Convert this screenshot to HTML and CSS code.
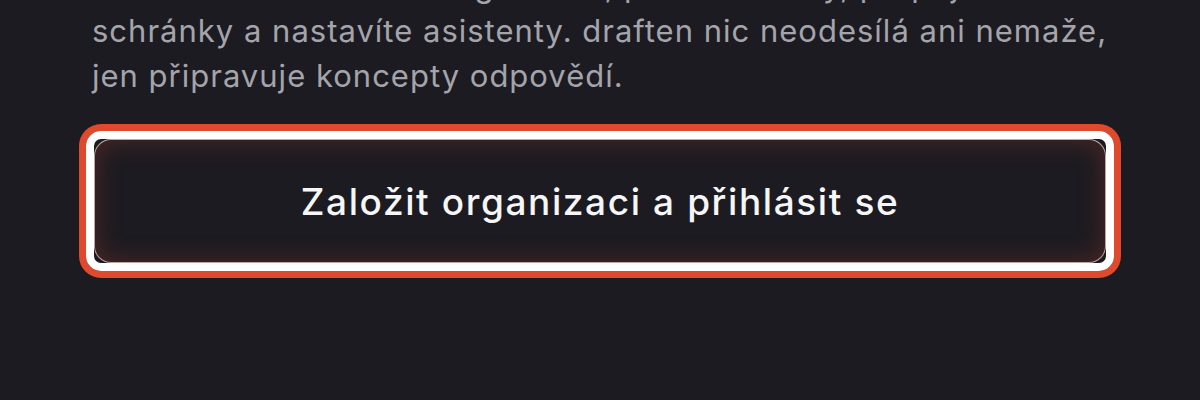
FILE: index.html
```html
<!DOCTYPE html>
<html lang="cs">
<head>
<meta charset="utf-8">
<title>draften – založení organizace</title>
<link rel="stylesheet" href="styles.css">
</head>
<body>
<main class="panel">
  <p class="intro">Na začátku si založíte organizaci, pozvete členy, propojíte e-mailové<br>schránky a nastavíte asistenty. draften nic neodesílá ani nemaže,<br>jen připravuje koncepty odpovědí.</p>
  <div class="focus-ring">
    <button class="cta" type="button">Založit organizaci a přihlásit se</button>
  </div>
</main>
</body>
</html>
```
FILE: styles.css
```css
html, body {
  margin: 0;
  padding: 0;
  background: #1c1b21;
}

body {
  font-family: Inter, "Noto Sans", "Liberation Sans", sans-serif;
  height: 400px;
  overflow: hidden;
}

.panel {
  width: 1014px;
  padding-left: 92px;
  display: flex;
  flex-direction: column;
}

.intro {
  margin: -37px 0 0 0;
  font-size: 31px;
  line-height: 45px;
  letter-spacing: 1px;
  color: #a4a4ab;
  white-space: nowrap;
}

.focus-ring {
  margin: 33px -8px 0 -6px;
  border: 8px solid #ffffff;
  border-radius: 15px;
  box-shadow: 0 0 0 7px #e1492d;
  display: flex;
}

.cta {
  flex: 1;
  height: 124px;
  margin: 0;
  border: 1px solid rgba(255, 226, 218, 0.7);
  border-radius: 17px;
  background: #1c1b21;
  box-shadow: inset 0 0 26px rgba(200, 70, 50, 0.3);
  color: #f6f6f7;
  font-family: Inter, "Noto Sans", "Liberation Sans", sans-serif;
  font-size: 37px;
  font-weight: 500;
  letter-spacing: 1.6px;
  cursor: pointer;
}
```
